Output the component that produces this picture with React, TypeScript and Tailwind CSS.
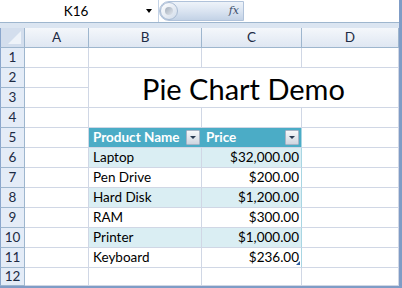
import React from "react";

const grid = "border-r border-b border-[#d0d7e5] bg-white";
const rowHead =
  "border-r border-b border-[#9eb6ce] bg-[#e4ecf7] text-[#1d2b44] flex items-center justify-center text-[13.5px]";

const data = [
  { name: "Laptop", price: "$32,000.00" },
  { name: "Pen Drive", price: "$200.00" },
  { name: "Hard Disk", price: "$1,200.00" },
  { name: "RAM", price: "$300.00" },
  { name: "Printer", price: "$1,000.00" },
  { name: "Keyboard", price: "$236.00" },
];

function FilterButton() {
  return (
    <div className="w-[14px] h-[15px] border border-[#a7b4c6] rounded-[1px] bg-gradient-to-b from-[#f7f8fa] to-[#cfd6e0] flex items-center justify-center">
      <div className="w-0 h-0 border-l-[3px] border-r-[3px] border-t-[3px] border-l-transparent border-r-transparent border-t-[#2b3a52]" />
    </div>
  );
}

export default function App() {
  const rows: React.ReactNode[] = [];

  for (let r = 1; r <= 12; r++) {
    rows.push(
      <div key={`h${r}`} className={rowHead + " border-l border-l-[#8aa6cc]"}>
        {r}
      </div>
    );
    rows.push(<div key={`a${r}`} className={grid} />);

    if (r === 2) {
      // B2:D3 merged title
      rows.push(
        <div
          key="title"
          className="col-span-3 row-span-2 border-r border-b border-[#d0d7e5] bg-white flex items-center justify-center pt-[2px] text-[29px] text-black"
        >
          Pie Chart Demo
        </div>
      );
    } else if (r === 3) {
      // covered by merged title
    } else if (r === 5) {
      rows.push(
        <div
          key="hb"
          className="bg-[#4bacc6] border-b border-[#d0d7e5] flex items-center justify-between pl-[4px] pr-[2px] text-white font-bold text-[13.5px]"
        >
          <span>Product Name</span>
          <FilterButton />
        </div>
      );
      rows.push(
        <div
          key="hc"
          className="bg-[#4bacc6] border-r border-b border-r-[#a9d6e3] border-b-[#d0d7e5] flex items-center justify-between pl-[4px] pr-[2px] text-white font-bold text-[13.5px]"
        >
          <span>Price</span>
          <FilterButton />
        </div>
      );
    } else if (r >= 6 && r <= 11) {
      const item = data[r - 6];
      const band = r % 2 === 0 ? "bg-[#daeef3]" : "bg-white";
      rows.push(
        <div
          key={`b${r}`}
          className={`${band} border-r border-b border-[#d0d7e5] flex items-center pl-[4px] text-[13.5px] text-black`}
        >
          {item.name}
        </div>
      );
      rows.push(
        <div
          key={`c${r}`}
          className={`${band} relative border-r border-b border-r-[#a9d6e3] border-b-[#d0d7e5] flex items-center justify-end pr-[2px] text-[13.5px] text-black`}
        >
          {item.price}
          {r === 11 && (
            <div className="absolute right-[1px] bottom-[2px] w-0 h-0 border-l-[4px] border-b-[4px] border-l-transparent border-b-[#2f5c9c]" />
          )}
        </div>
      );
    } else {
      rows.push(<div key={`b${r}`} className={grid} />);
      rows.push(<div key={`c${r}`} className={grid} />);
    }

    if (r !== 2 && r !== 3) rows.push(<div key={`d${r}`} className={grid} />);
  }

  return (
    <div className="w-[402px] h-[288px] overflow-hidden bg-[#dbe5f1] font-['Lato',sans-serif] border-r-[3px] border-r-[#7f9cc6] border-b-2 border-b-[#7f9cc6]">
      {/* formula bar */}
      <div className="h-[23px] flex bg-white border-b border-[#9eb6ce]">
        <div className="w-[159px] flex items-center border-r border-[#c4d3e6]">
          <span className="flex-1 text-center text-[13.5px] text-black pl-[6px]">K16</span>
          <div className="w-0 h-0 mr-[6px] border-l-[3.5px] border-r-[3.5px] border-t-[4px] border-l-transparent border-r-transparent border-t-black" />
        </div>
        <div className="w-[85px] my-[1px] flex items-center rounded-l-full bg-gradient-to-b from-[#eef3f9] via-[#dae4f1] to-[#c3d2e6] border border-[#b0c2da]">
          <div className="w-[18px] h-[18px] rounded-full bg-gradient-to-br from-white to-[#d2dcea] border border-[#a9bbd3] flex items-center justify-center">
            <div className="w-[8px] h-[8px] rounded-full bg-gradient-to-br from-[#a3adba] to-[#e2e7ee]" />
          </div>
          <span className="ml-auto mr-[4px] font-['DejaVu_Serif',serif] italic text-[11px] text-[#3d4f6a]">
            fx
          </span>
        </div>
        <div className="flex-1 bg-white" />
      </div>
      <div className="h-[5px] bg-[#dbe5f1]" />
      {/* sheet */}
      <div className="grid grid-cols-[25px_64px_113px_100px_97px] grid-rows-[20px_repeat(11,20px)_18px]">
        <div className="relative bg-[#d3deed] border-l border-l-[#8aa6cc] border-r border-b border-[#9eb6ce]">
          <div className="absolute right-[3px] bottom-[3px] w-0 h-0 border-r-[13px] border-t-[13px] border-r-[#eef3f9] border-t-transparent" />
        </div>
        {["A", "B", "C", "D"].map((c) => (
          <div
            key={c}
            className="border-r border-b border-[#9eb6ce] bg-gradient-to-b from-[#f4f7fb] to-[#dfe7f2] text-[#1d2b44] flex items-center justify-center text-[13.5px]"
          >
            {c}
          </div>
        ))}
        {rows}
      </div>
    </div>
  );
}
